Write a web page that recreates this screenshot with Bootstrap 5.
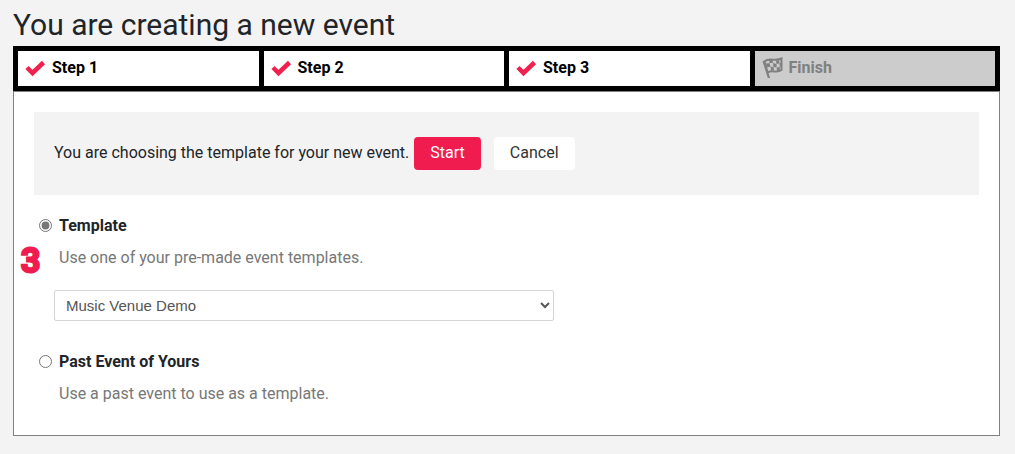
<!DOCTYPE html>
<html lang="en">
<head>
<meta charset="utf-8">
<meta name="viewport" content="width=device-width, initial-scale=1">
<title>Create event</title>
<link href="https://cdn.jsdelivr.net/npm/bootstrap@5.3.0/dist/css/bootstrap.min.css" rel="stylesheet">
<style>
  body { font-family: Roboto, sans-serif; font-size: 16px; line-height: 24px; color: #212529; background: #f3f3f3; }
  .page { padding: 6px 15px 18px 13px; }
  .page-title { font-size: 30px; line-height: 38px; padding-bottom: 2px; font-weight: 400; }
  .steps { border: 5px solid #000; gap: 5px; background: #000; }
  .step { background: #fff; color: #000; height: 35px; padding: 0 7px 2px; gap: 6px; font-weight: 700; }
  .step svg { width: 21px; height: 21px; flex: none; }
  .step-finish { background: #ccc; color: #808080; }
  .panel { background: #fff; border: 1px solid #808080; padding: 20px 20px 29px; }
  .notice { background: #f3f3f3; padding: 25px 20px; margin-bottom: 19px; }
  .notice .btn { height: 33px; padding: 0 16px 2px; border: 0; border-radius: 4px; line-height: 31px; }
  .notice-text { padding-bottom: 2px; margin-right: 5px; }
  .btn-start, .btn-start:hover { background: #f01c4f; color: #fff; margin-right: 13px; }
  .btn-cancel, .btn-cancel:hover { background: #fff; color: #333; }
  .choice { padding: 0 5px; gap: 7px; font-weight: 700; }
  .choice input { width: 13px; height: 13px; margin: 0 0 2px; accent-color: #767676; }
  .hint { color: #777; padding: 8px 0 0 25px; margin: 0; }
  .marker { left: -13px; top: 27px; font: 500 34px/38px Roboto, sans-serif; color: #f01c4f; -webkit-text-stroke: 3px #f01c4f; }
  .template-select { display: block; width: 100%; max-width: 500px; height: 31px; margin: 20px 0 29px 20px; padding: 0 7px; border: 1px solid #d4d4d4; border-radius: 2px; background: #fff; color: #555; font: 15px "Liberation Sans", sans-serif; }
</style>
</head>
<body>
<main class="page">
  <h1 class="page-title m-0">You are creating a new event</h1>
  <div class="steps d-flex">
    <div class="step d-flex align-items-center flex-fill w-100"><svg viewBox="0 0 21 21" aria-hidden="true"><path d="M2 10.500 L7.500 16 L18.500 5.500" fill="none" stroke="#f0204f" stroke-width="4.500"/></svg>Step 1</div>
    <div class="step d-flex align-items-center flex-fill w-100"><svg viewBox="0 0 21 21" aria-hidden="true"><path d="M2 10.500 L7.500 16 L18.500 5.500" fill="none" stroke="#f0204f" stroke-width="4.500"/></svg>Step 2</div>
    <div class="step d-flex align-items-center flex-fill w-100"><svg viewBox="0 0 21 21" aria-hidden="true"><path d="M2 10.500 L7.500 16 L18.500 5.500" fill="none" stroke="#f0204f" stroke-width="4.500"/></svg>Step 3</div>
    <div class="step step-finish d-flex align-items-center flex-fill w-100"><svg viewBox="0 0 21 21" aria-hidden="true"><g fill="none" stroke="currentColor"><path d="M1.500 4 L7 21" stroke-width="2.200"/><path d="M2.500 4.500 C7 0 13 5 19.500 1.500 L19.500 13 C14 17 11 12 5.500 15.500 Z" stroke-width="2"/></g><path fill="currentColor" d="M7 2.500 10.500 2.500 11 6 7.500 6ZM14 3.500 17 3 17.500 6.500 14.500 7ZM4 6.500 7.500 6 8.500 9.500 5 10.500ZM11 6 14.500 7 14.700 10.500 11.500 10ZM17.500 6.500 20 5 20 9 17.700 10ZM8.500 9.500 11.500 10 12 13.500 9 13.500ZM14.700 10.500 17.700 10 18 14 15 15Z"/></svg>Finish</div>
  </div>
  <section class="panel">
    <div class="notice d-flex flex-wrap align-items-center">
      <span class="notice-text">You are choosing the template for your new event.</span>
      <button type="button" class="btn btn-start">Start</button>
      <button type="button" class="btn btn-cancel">Cancel</button>
    </div>
    <div class="position-relative">
      <div class="choice d-flex align-items-center"><input type="radio" name="source" id="template" checked><label for="template">Template</label></div>
      <p class="hint">Use one of your pre-made event templates.</p>
      <span class="marker position-absolute">3</span>
    </div>
    <select class="template-select" aria-label="Event template"><option>Music Venue Demo</option></select>
    <div class="choice d-flex align-items-center"><input type="radio" name="source" id="past"><label for="past">Past Event of Yours</label></div>
    <p class="hint">Use a past event to use as a template.</p>
  </section>
</main>
<script src="https://cdn.jsdelivr.net/npm/bootstrap@5.3.0/dist/js/bootstrap.bundle.min.js"></script>
</body>
</html>
